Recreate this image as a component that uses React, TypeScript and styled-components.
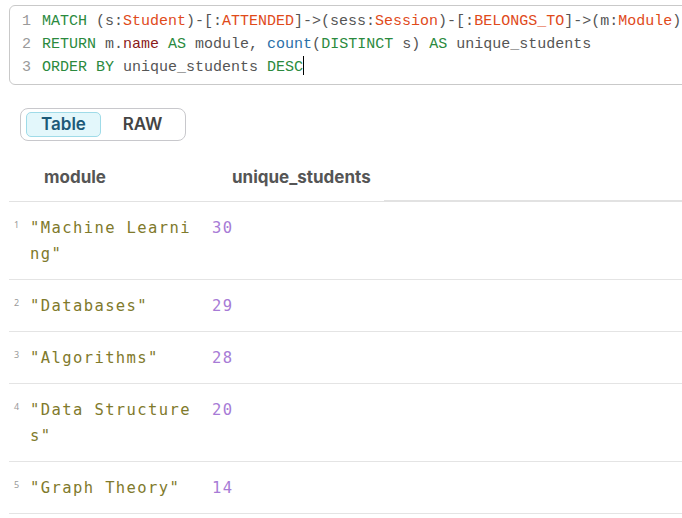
import styled, { createGlobalStyle } from "styled-components";
import { useState } from "react";

const GlobalStyle = createGlobalStyle`
    html, body {
        margin: 0;
        padding: 0;
        background: #ffffff;
        overflow: hidden;
    }
`;

const Wrapper = styled.div`
    padding: 5px 0 0 9px;
    width: 682px;
    box-sizing: border-box;
    overflow: hidden;
`;

const Editor = styled.div`
    width: 700px;
    box-sizing: border-box;
    border: 1px solid #c9c9c9;
    border-radius: 6px;
    padding: 4px 0 5px 0;
    background: #ffffff;
    font-family: "Liberation Mono", monospace;
    font-size: 15px;
    line-height: 23px;
`;

const CodeLine = styled.div`
    white-space: pre;
    color: #555555;
`;

const LineNo = styled.span`
    display: inline-block;
    width: 21px;
    text-align: right;
    padding-right: 11px;
    color: #9a9a9a;
`;

const Cursor = styled.span`
    display: inline-block;
    width: 1px;
    height: 19px;
    background: #000000;
    vertical-align: -4px;
`;

const Kw = styled.span`
    color: #2b8a3e;
`;
const Label = styled.span`
    color: #e04a1a;
`;
const Prop = styled.span`
    color: #8a1a1a;
`;
const Fn = styled.span`
    color: #2a6fa8;
`;

const Toggle = styled.div`
    display: inline-flex;
    margin: 23px 0 0 11px;
    padding: 3px 5px;
    gap: 4px;
    border: 1px solid #c8c8cc;
    border-radius: 8px;
    font-family: Inter, "Noto Sans", sans-serif;
    font-size: 17px;
    font-weight: 600;
`;

const ToggleBtn = styled.button<{ active: boolean }>`
    font: inherit;
    cursor: pointer;
    width: 75px;
    height: 25px;
    padding: 0;
    border-radius: 5px;
    border: 1px solid ${p => (p.active ? "#9fdbe8" : "transparent")};
    background: ${p => (p.active ? "#e3f7fb" : "transparent")};
    color: ${p => (p.active ? "#1d5a78" : "#444444")};
    line-height: 23px;
`;

const Table = styled.div`
    margin-top: 11px;
    display: grid;
    grid-template-columns: 188px 187px 1fr;
`;

const HeadCell = styled.div<{ filler?: boolean }>`
    height: 50px;
    box-sizing: border-box;
    display: flex;
    align-items: center;
    padding-left: 35px;
    border-bottom: ${p => (p.filler ? "2px solid #e2e2e2" : "1px solid #e2e2e2")};
    font-family: Inter, "Noto Sans", sans-serif;
    font-size: 17px;
    font-weight: 700;
    color: #555555;
`;

const Cell = styled.div`
    border-bottom: 1px solid #e4e4e4;
    padding: 13px 0 12px 15px;
    font-family: "DejaVu Sans Mono", monospace;
    font-size: 15.5px;
    letter-spacing: 1.4px;
    line-height: 26px;
`;

const FirstCell = styled(Cell)`
    display: flex;
    padding-left: 5px;
`;

const Index = styled.span`
    width: 16px;
    flex: none;
    font-family: "Noto Sans", sans-serif;
    font-size: 9px;
    letter-spacing: 0;
    line-height: 20px;
    color: #9a9a9a;
`;

const Str = styled.span`
    width: 170px;
    word-break: break-all;
    color: #7f7a2c;
`;

const Num = styled.span`
    color: #a77bd6;
`;

const rows = [
    { name: "Machine Learning", count: 30 },
    { name: "Databases", count: 29 },
    { name: "Algorithms", count: 28 },
    { name: "Data Structures", count: 20 },
    { name: "Graph Theory", count: 14 }
];

function App() {
    const [view, setView] = useState("table");
    return (
        <Wrapper>
            <GlobalStyle />
            <Editor>
                <CodeLine>
                    <LineNo>1</LineNo>
                    <Kw>MATCH</Kw> (s:<Label>Student</Label>)-[:<Label>ATTENDED</Label>]-&gt;(sess:<Label>Session</Label>)-[:<Label>BELONGS_TO</Label>]-&gt;(m:<Label>Module</Label>)
                </CodeLine>
                <CodeLine>
                    <LineNo>2</LineNo>
                    <Kw>RETURN</Kw> m.<Prop>name</Prop> <Kw>AS</Kw> module, <Fn>count</Fn>(<Kw>DISTINCT</Kw> s) <Kw>AS</Kw> unique_students
                </CodeLine>
                <CodeLine>
                    <LineNo>3</LineNo>
                    <Kw>ORDER BY</Kw> unique_students <Kw>DESC</Kw><Cursor />
                </CodeLine>
            </Editor>
            <Toggle>
                <ToggleBtn active={view === "table"} onClick={() => setView("table")}>
                    Table
                </ToggleBtn>
                <ToggleBtn active={view === "raw"} onClick={() => setView("raw")}>
                    RAW
                </ToggleBtn>
            </Toggle>
            <Table>
                <HeadCell>module</HeadCell>
                <HeadCell>unique_students</HeadCell>
                <HeadCell filler />
                {rows.map((r, i) => (
                    <>
                        <FirstCell key={"n" + i}>
                            <Index>{i + 1}</Index>
                            <Str>"{r.name}"</Str>
                        </FirstCell>
                        <Cell key={"c" + i}>
                            <Num>{r.count}</Num>
                        </Cell>
                        <Cell key={"f" + i} />
                    </>
                ))}
            </Table>
        </Wrapper>
    );
}

export default App;
